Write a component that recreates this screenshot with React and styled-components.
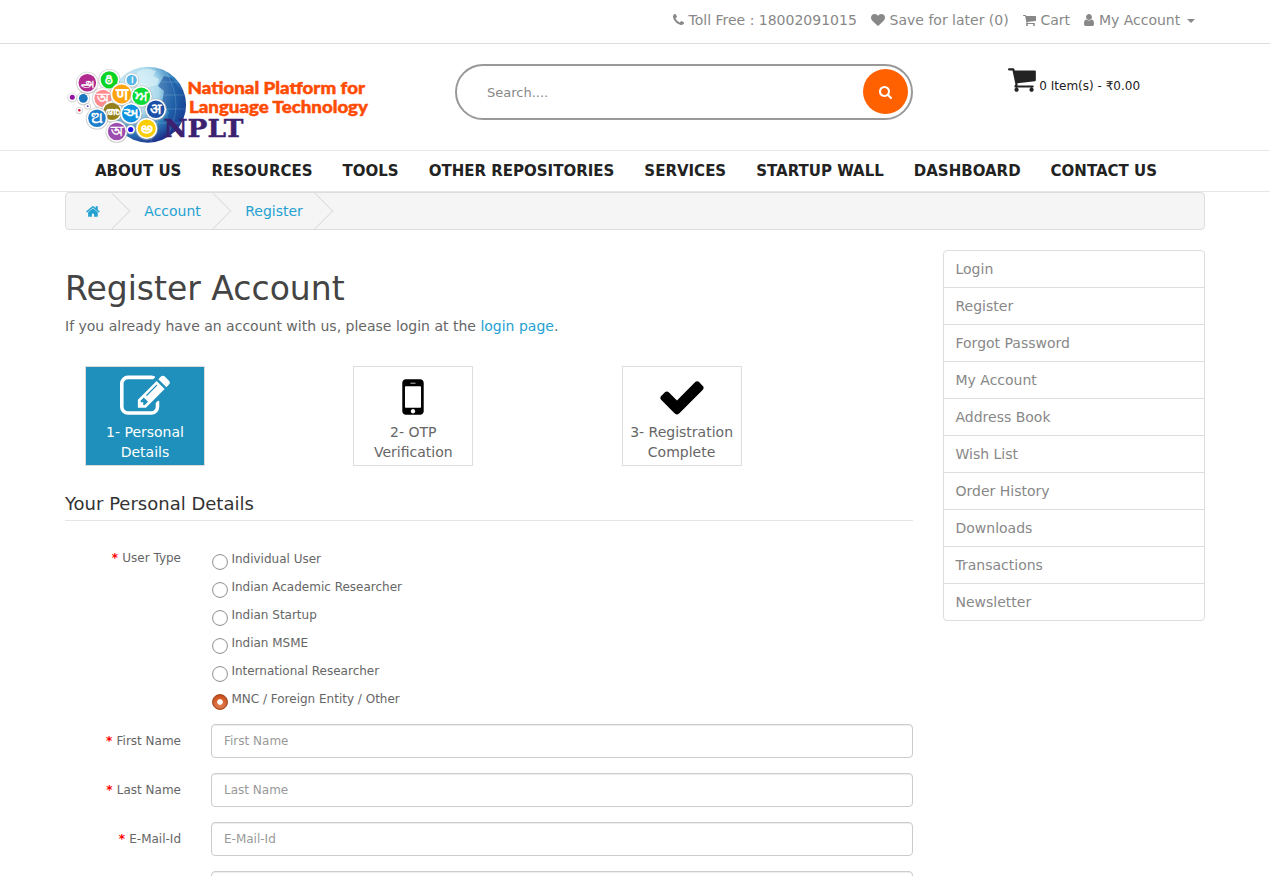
import React, { useState } from "react";
import styled, { createGlobalStyle } from "styled-components";

const GlobalStyle = createGlobalStyle`
  *, *::before, *::after { box-sizing: border-box; }
  html { overflow: hidden; }
  body {
    margin: 0;
    background: #fff;
    color: #666;
    font: 400 12px/20px "DejaVu Sans", sans-serif;
  }
  #root { height: 876px; overflow: hidden; }
  a { color: #23a1d1; text-decoration: none; }
`;

/* Icon outlines on a 1792-unit em square: [left edge, advance width, path] */
const ICONS = {
  phone: [192, 1408, "M1600 1240q0 27-10 70.5t-21 68.5q-21 50-122 106-94 51-186 51-27 0-53-3.5t-57.5-12.5-47-14.5-55.5-20.5-49-18q-98-35-175-83-127-79-264-216t-216-264q-48-77-83-175-3-9-18-49t-20.5-55.5-14.5-47-12.5-57.5-3.5-53q0-92 51-186 56-101 106-122 25-11 68.5-21t70.5-10q14 0 21 3 18 6 53 76 11 19 30 54t35 63.5 31 53.5q3 4 17.5 25t21.5 35.5 7 28.5q0 20-28.5 50t-62 55-62 53-28.5 46q0 9 5 22.5t8.5 20.5 14 24 11.5 19q76 137 174 235t235 174q2 1 19 11.5t24 14 20.5 8.5 22.5 5q18 0 46-28.5t53-62 55-62 50-28.5q14 0 28.5 7t35.5 21.5 25 17.5q25 15 53.5 31t63.5 35 54 30q70 35 76 53 3 7 3 21z"],
  heart: [0, 1792, "M896 1664q-26 0-44-18l-624-602q-10-8-27.5-26t-55.5-65.5-68-97.5-53.5-121-23.5-138q0-220 127-344t351-124q62 0 126.5 21.5t120 58 95.5 68.5 76 68q36-36 76-68t95.5-68.5 120-58 126.5-21.5q224 0 351 124t127 344q0 221-229 450l-623 600q-18 18-44 18z"],
  cart: [64, 1664, "M704 1536q0 52-38 90t-90 38-90-38-38-90 38-90 90-38 90 38 38 90zm896 0q0 52-38 90t-90 38-90-38-38-90 38-90 90-38 90 38 38 90zm128-1088v512q0 24-16.5 42.5t-40.5 21.5l-1044 122q13 60 13 70 0 16-24 64h920q26 0 45 19t19 45-19 45-45 19h-1024q-26 0-45-19t-19-45q0-11 8-31.5t16-36 21.5-40 15.5-29.5l-177-823h-204q-26 0-45-19t-19-45 19-45 45-19h256q16 0 28.5 6.5t19.5 15.5 13 24.5 8 26 5.5 29.5 4.5 26h1201q26 0 45 19t19 45z"],
  user: [256, 1280, "M1536 1399q0 109-62.5 187t-150.5 78h-854q-88 0-150.5-78t-62.5-187q0-85 8.5-160.5t31.5-152 58.5-131 94-89 134.5-34.5q131 128 313 128t313-128q76 0 134.5 34.5t94 89 58.5 131 31.5 152 8.5 160.5zm-256-887q0 159-112.5 271.5t-271.5 112.5-271.5-112.5-112.5-271.5 112.5-271.5 271.5-112.5 271.5 112.5 112.5 271.5z"],
  search: [64, 1664, "M1216 832q0-185-131.5-316.5t-316.5-131.5-316.5 131.5-131.5 316.5 131.5 316.5 316.5 131.5 316.5-131.5 131.5-316.5zm512 832q0 52-38 90t-90 38q-54 0-90-38l-343-342q-179 124-399 124-143 0-273.5-55.5t-225-150-150-225-55.5-273.5 55.5-273.5 150-225 225-150 273.5-55.5 273.5 55.5 225 150 150 225 55.5 273.5q0 220-124 399l343 343q37 37 37 90z"],
  home: [64, 1664, "M1472 992v480q0 26-19 45t-45 19h-384v-384h-256v384h-384q-26 0-45-19t-19-45v-480q0-1 .5-3t.5-3l575-474 575 474q1 2 1 6zm223-69l-62 74q-8 9-21 11h-3q-13 0-21-7l-692-577-692 577q-12 8-24 7-13-2-21-11l-62-74q-8-10-7-23.5t11-21.5l719-599q32-26 76-26t76 26l244 204v-195q0-14 9-23t23-9h192q14 0 23 9t9 23v408l219 182q10 8 11 21.5t-7 23.5z"],
  edit: [0, 1792, "M888 1184l116-116-152-152-116 116v56h96v96h56zm440-720q-16-16-33 1l-350 350q-17 17-1 33t33-1l350-350q17-17 1-33zm80 594v190q0 119-84.5 203.5t-203.5 84.5h-832q-119 0-203.5-84.5t-84.5-203.5v-832q0-119 84.5-203.5t203.5-84.5h832q63 0 117 25 15 7 18 23 3 17-9 29l-49 49q-14 14-32 8-23-6-45-6h-832q-66 0-113 47t-47 113v832q0 66 47 113t113 47h832q66 0 113-47t47-113v-126q0-13 9-22l64-64q15-15 35-7t20 29zm-96-738l288 288-672 672h-288v-288zm444 132l-92 92-288-288 92-92q28-28 68-28t68 28l152 152q28 28 28 68t-28 68z"],
  mobile: [0, 1792, "M976 1408q0-33-23.5-56.5t-56.5-23.5-56.5 23.5-23.5 56.5 23.5 56.5 56.5 23.5 56.5-23.5 23.5-56.5zm208-160v-704q0-13-9.5-22.5t-22.5-9.5h-512q-13 0-22.5 9.5t-9.5 22.5v704q0 13 9.5 22.5t22.5 9.5h512q13 0 22.5-9.5t9.5-22.5zm-192-848q0-16-16-16h-160q-16 0-16 16t16 16h160q16 0 16-16zm288-16v1024q0 52-38 90t-90 38h-512q-52 0-90-38t-38-90v-1024q0-52 38-90t90-38h512q52 0 90 38t38 90z"],
  check: [0, 1792, "M1671 566q0 40-28 68l-724 724-136 136q-28 28-68 28t-68-28l-136-136-362-362q-28-28-28-68t28-68l136-136q28-28 68-28t68 28l294 295 656-657q28-28 68-28t68 28l136 136q28 28 28 68z"],
};

const IconSvg = styled.svg`
  display: block;
  flex: none;
  fill: currentColor;
`;

function Icon({ name, size = 14 }) {
  const [left, width, d] = ICONS[name];
  return (
    <IconSvg width={(width / 1792) * size} height={size} viewBox={`${left} 0 ${width} 1792`} aria-hidden="true">
      <path d={d} />
    </IconSvg>
  );
}

const Page = styled.div`
  width: 1270px;
`;

const Container = styled.div`
  width: 1140px;
  margin: 0 auto;
`;

const TopBar = styled.nav`
  height: 44px;
  border-bottom: 1px solid #ddd;
`;

const TopLinks = styled(Container)`
  display: flex;
  justify-content: flex-end;
  gap: 14.4px;
  padding: 10px 10.4px 0 0;
  font-size: 14px;
`;

const TopLink = styled.a`
  display: flex;
  align-items: center;
  gap: 4.4px;
  && { color: #888; }
`;

const Caret = styled.span`
  margin: 1px 0 0 2px;
  border: 4px solid transparent;
  border-top-color: currentColor;
  border-bottom: 0;
`;

const Header = styled(Container)`
  display: grid;
  grid-template-columns: 390px 458px 1fr;
  height: 106px;
  align-items: start;
`;

const LogoSvg = styled.svg`
  display: block;
  margin-top: 16px;
`;

const SearchBox = styled.div`
  display: flex;
  align-items: center;
  justify-content: space-between;
  height: 56px;
  margin-top: 20px;
  padding: 0 3px 0 30px;
  border: 2px solid #999;
  border-radius: 28px;
`;

const SearchInput = styled.input`
  flex: 1;
  min-width: 0;
  padding: 2px 0 0;
  border: 0;
  outline: 0;
  background: none;
  font: 13px/20px "DejaVu Sans", sans-serif;
  color: #555;
  &::placeholder { color: #888; opacity: 1; }
`;

const SearchButton = styled.button`
  display: flex;
  align-items: center;
  justify-content: center;
  width: 45px;
  height: 45px;
  margin-bottom: 1px;
  padding: 0;
  border: 0;
  border-radius: 50%;
  background: #ff6000;
  color: #fff;
`;

const CartSummary = styled.div`
  display: flex;
  align-items: flex-start;
  gap: 3.5px;
  margin: 20px 0 0 95px;
  color: #222;

  svg { margin-top: -0.5px; }
`;

const CartText = styled.span`
  margin-top: 12px;
`;

const MainNav = styled.nav`
  height: 42px;
  border: solid #e7e7e7;
  border-width: 1px 0;
`;

const NavList = styled(Container)`
  display: flex;
  gap: 30px;
  padding: 10px 30px 0;
`;

const NavLink = styled.a`
  font-size: 15px;
  font-weight: 700;
  white-space: nowrap;
  && { color: #222; }
`;

const Crumbs = styled.ul`
  display: flex;
  gap: 4.4px;
  height: 38px;
  margin: 0 0 20px;
  padding: 0;
  overflow: hidden;
  list-style: none;
  background: #f5f5f5;
  border: 1px solid #ddd;
  border-radius: 4px;
  font-size: 14px;
`;

const Crumb = styled.li`
  position: relative;
  display: flex;
  align-items: center;
  padding: 0 20px;
  &::after {
    content: "";
    position: absolute;
    top: 5px;
    right: -5px;
    width: 26px;
    height: 26px;
    border: solid #ddd;
    border-width: 1px 1px 0 0;
    transform: rotate(45deg);
  }
`;

const Columns = styled.div`
  display: grid;
  grid-template-columns: 848px 262px;
  gap: 30px;
  align-items: start;
`;

const Title = styled.h1`
  margin: 21px 0 9px;
  font-size: 33px;
  font-weight: 400;
  line-height: 36px;
  color: #444;
`;

const Intro = styled.p`
  margin: 0;
  font-size: 14px;
`;

const Steps = styled.div`
  display: grid;
  grid-template-columns: repeat(3, 268.3px);
  padding: 30px 0 0 20px;
`;

const Step = styled.div`
  width: 120px;
  height: 100px;
  padding: 5px 4px 0;
  border: 1px solid #ddd;
  background: ${(p) => (p.$active ? "#1f90bb" : "#fff")};
  color: ${(p) => (p.$active ? "#fff" : "#666")};
  font-size: 14px;
  text-align: center;
`;

const StepIcon = styled.div`
  display: flex;
  justify-content: center;
  color: ${(p) => (p.$active ? "#fff" : "#000")};
`;

const Legend = styled.h2`
  margin: 26px 0 27px;
  padding: 0 0 4px;
  border-bottom: 1px solid #e5e5e5;
  font-size: 18px;
  font-weight: 400;
  line-height: 24px;
  color: #333;
`;

const Field = styled.div`
  display: grid;
  grid-template-columns: 116px 702px;
  column-gap: 30px;
  margin-bottom: 15px;
`;

const Label = styled.label`
  padding-top: ${(p) => (p.$top ?? 7)}px;
  text-align: right;
  &::before {
    content: "* ";
    color: #f00;
    font-weight: 700;
  }
`;

const TextInput = styled.input`
  grid-column: 2;
  height: 34px;
  padding: 6px 12px;
  border: 1px solid #ccc;
  border-radius: 4px;
  outline: 0;
  box-shadow: inset 0 1px 1px rgba(0, 0, 0, 0.075);
  font: 12px/20px "DejaVu Sans", sans-serif;
  color: #555;
  &::placeholder { color: #999; opacity: 1; }
`;

const RadioList = styled.div`
  display: grid;
  gap: 8px;
  padding-top: 1px;
`;

const RadioLabel = styled.label`
  display: flex;
  gap: 3.4px;
  height: 20px;
  padding-left: 1px;
`;

const Radio = styled.input`
  appearance: none;
  width: 16px;
  height: 16px;
  margin: 5px 0 0;
  border: 1px solid #999;
  border-radius: 50%;
  background: #fff;
  box-shadow: inset 0 0 1px #bbb;
  &:checked {
    border-color: #a8461f;
    background: radial-gradient(circle, #fff 0 2.4px, transparent 3.2px),
      linear-gradient(#cd4c18, #e58558);
    background-origin: border-box;
    box-shadow: inset 0 0 2px #9b3e18;
  }
`;

const SideList = styled.div`
  display: flex;
  flex-direction: column;
  border: 1px solid #ddd;
  border-radius: 4px;
`;

const SideLink = styled.a`
  height: 37px;
  padding: 8px 11.5px;
  font-size: 14px;
  && { color: #888; }
  &:not(:last-child) { border-bottom: 1px solid #ddd; }
  &:last-child { height: 36px; }
`;

const Badge = ({ x, y, r, fill, char, size = 14 }) => (
  <g>
    <circle cx={x} cy={y + 0.3} r={r + 2.4} fill="#aaa" opacity="0.55" />
    <circle cx={x} cy={y} r={r + 1.6} fill="#fff" />
    <circle cx={x} cy={y} r={r} fill={fill} />
    {char && (
      <text x={x} y={y + size * 0.33} fontSize={size} fill="#fff" textAnchor="middle" fontWeight="700">
        {char}
      </text>
    )}
  </g>
);

const BADGES = [
  { x: 72.3, y: 97.3, r: 2.5, fill: "#9112a0" },
  { x: 83.3, y: 98.3, r: 4.4, fill: "#1b76bd" },
  { x: 79.3, y: 110.3, r: 1.3, fill: "#d9143c" },
  { x: 87.7, y: 106.2, r: 0.9, fill: "#5147c8" },
  { x: 131.7, y: 80, r: 5.2, fill: "#55b5e5", char: "।", size: 10 },
  { x: 87.3, y: 82.7, r: 8.8, fill: "#b02a90", char: "அ", size: 12 },
  { x: 109.3, y: 79.8, r: 8.6, fill: "#0cd424", char: "ఠి", size: 13 },
  { x: 103, y: 98.3, r: 8.6, fill: "#ff8b8f", char: "অ" },
  { x: 112, y: 111.3, r: 8.6, fill: "#94801b", char: "അ", size: 11 },
  { x: 121.7, y: 94, r: 9.5, fill: "#ffa40c", char: "ण", size: 17 },
  { x: 141.3, y: 96.3, r: 8.8, fill: "#08db35", char: "ਅ", size: 15 },
  { x: 131, y: 113.5, r: 9, fill: "#0d91de", char: "અ", size: 15 },
  { x: 155.7, y: 109.3, r: 8.8, fill: "#1b4fa8", char: "अ", size: 15 },
  { x: 97, y: 118.3, r: 8.8, fill: "#1d7fcb", char: "ଅ", size: 15 },
  { x: 116.7, y: 131.5, r: 8.8, fill: "#9c4bae", char: "অ" },
  { x: 130.7, y: 129.5, r: 2.6, fill: "#1b0fe0" },
  { x: 146.7, y: 128.5, r: 9, fill: "#fbcd05", char: "అ", size: 15 },
];

function Logo() {
  return (
    <LogoSvg width="310" height="86" viewBox="65 60 310 86" role="img" fontFamily='"DejaVu Sans", sans-serif'>
      <defs>
        <radialGradient id="globe" cx="0.3" cy="0.3" r="0.75">
          <stop offset="0" stopColor="#e4f7fc" />
          <stop offset="0.45" stopColor="#a9d8ec" />
          <stop offset="0.75" stopColor="#2d7dbb" />
          <stop offset="1" stopColor="#1c318c" />
        </radialGradient>
        <clipPath id="globeClip"><circle cx="148" cy="104.7" r="38" /></clipPath>
      </defs>
      <circle cx="148" cy="104.7" r="38" fill="url(#globe)" />
      <g clipPath="url(#globeClip)">
        <path d="M138 71q9-4 18 0l-3 5 6 3-2 6-8 2-5 7-7-5-4-9z" fill="#dff3f8" opacity="0.6" />
        <path d="M164 76l8 2 7 10 7 8v28l-12 9-7-12 2-9-7-9 2-12-6-5z" fill="#174e9c" opacity="0.6" />
        <path d="M119 82h65M112 95h74M112 109h74M117 123h66M150 67q19 38 0 76M165 71q22 34 0 68" fill="none" stroke="#bee5f6" strokeWidth="0.4" opacity="0.5" />
      </g>
      {BADGES.map((b, i) => <Badge key={i} {...b} />)}
      <g fill="#ff4c05" stroke="#ff4c05" strokeWidth="0.5" fontFamily="Lato, sans-serif" fontWeight="900" fontSize="17.5">
        <text x="187.5" y="94" textLength="177.5" lengthAdjust="spacingAndGlyphs">National Platform for</text>
        <text x="189" y="112.7" textLength="179" lengthAdjust="spacingAndGlyphs">Language Technology</text>
      </g>
      <text x="163.5" y="137" fill="#3b216f" stroke="#3b216f" strokeWidth="0.4" fontFamily='"DejaVu Serif", serif' fontWeight="700" fontSize="23.5" textLength="80" lengthAdjust="spacingAndGlyphs">NPLT</text>
    </LogoSvg>
  );
}

const NAV = ["ABOUT US", "RESOURCES", "TOOLS", "OTHER REPOSITORIES", "SERVICES", "STARTUP WALL", "DASHBOARD", "CONTACT US"];
const USER_TYPES = ["Individual User", "Indian Academic Researcher", "Indian Startup", "Indian MSME", "International Researcher", "MNC / Foreign Entity / Other"];
const SIDE = ["Login", "Register", "Forgot Password", "My Account", "Address Book", "Wish List", "Order History", "Downloads", "Transactions", "Newsletter"];
const STEPS = [
  { icon: "edit", lines: ["1- Personal", "Details"], active: true },
  { icon: "mobile", lines: ["2- OTP", "Verification"] },
  { icon: "check", lines: ["3- Registration", "Complete"] },
];

export default function App() {
  const [type, setType] = useState(USER_TYPES[5]);
  return (
    <Page>
      <GlobalStyle />
      <TopBar>
        <TopLinks>
          <TopLink><Icon name="phone" />Toll Free : 18002091015</TopLink>
          <TopLink><Icon name="heart" />Save for later (0)</TopLink>
          <TopLink><Icon name="cart" />Cart</TopLink>
          <TopLink><Icon name="user" />My Account<Caret /></TopLink>
        </TopLinks>
      </TopBar>
      <Header as="header">
        <Logo />
        <SearchBox>
          <SearchInput placeholder="Search...." />
          <SearchButton aria-label="Search"><Icon name="search" /></SearchButton>
        </SearchBox>
        <CartSummary>
          <Icon name="cart" size={30} />
          <CartText>0 Item(s) - ₹0.00</CartText>
        </CartSummary>
      </Header>
      <MainNav>
        <NavList>{NAV.map((n) => <NavLink key={n}>{n}</NavLink>)}</NavList>
      </MainNav>
      <Container>
        <Crumbs>
          <Crumb><a aria-label="Home"><Icon name="home" size={15} /></a></Crumb>
          <Crumb><a>Account</a></Crumb>
          <Crumb><a>Register</a></Crumb>
        </Crumbs>
        <Columns>
          <main>
            <Title>Register Account</Title>
            <Intro>If you already have an account with us, please login at the <a>login page</a>.</Intro>
            <Steps>
              {STEPS.map((s) => (
                <Step key={s.icon} $active={s.active}>
                  <StepIcon $active={s.active}><Icon name={s.icon} size={50} /></StepIcon>
                  {s.lines[0]}<br />{s.lines[1]}
                </Step>
              ))}
            </Steps>
            <Legend>Your Personal Details</Legend>
            <Field>
              <Label as="span" $top={0}>User Type</Label>
              <RadioList>
                {USER_TYPES.map((t) => (
                  <RadioLabel key={t}>
                    <Radio type="radio" name="userType" checked={type === t} onChange={() => setType(t)} />
                    {t}
                  </RadioLabel>
                ))}
              </RadioList>
            </Field>
            {["First Name", "Last Name", "E-Mail-Id"].map((f) => (
              <Field key={f}>
                <Label htmlFor={f}>{f}</Label>
                <TextInput id={f} placeholder={f} />
              </Field>
            ))}
            <Field><TextInput type="tel" /></Field>
          </main>
          <SideList as="aside">{SIDE.map((s) => <SideLink key={s}>{s}</SideLink>)}</SideList>
        </Columns>
      </Container>
    </Page>
  );
}
